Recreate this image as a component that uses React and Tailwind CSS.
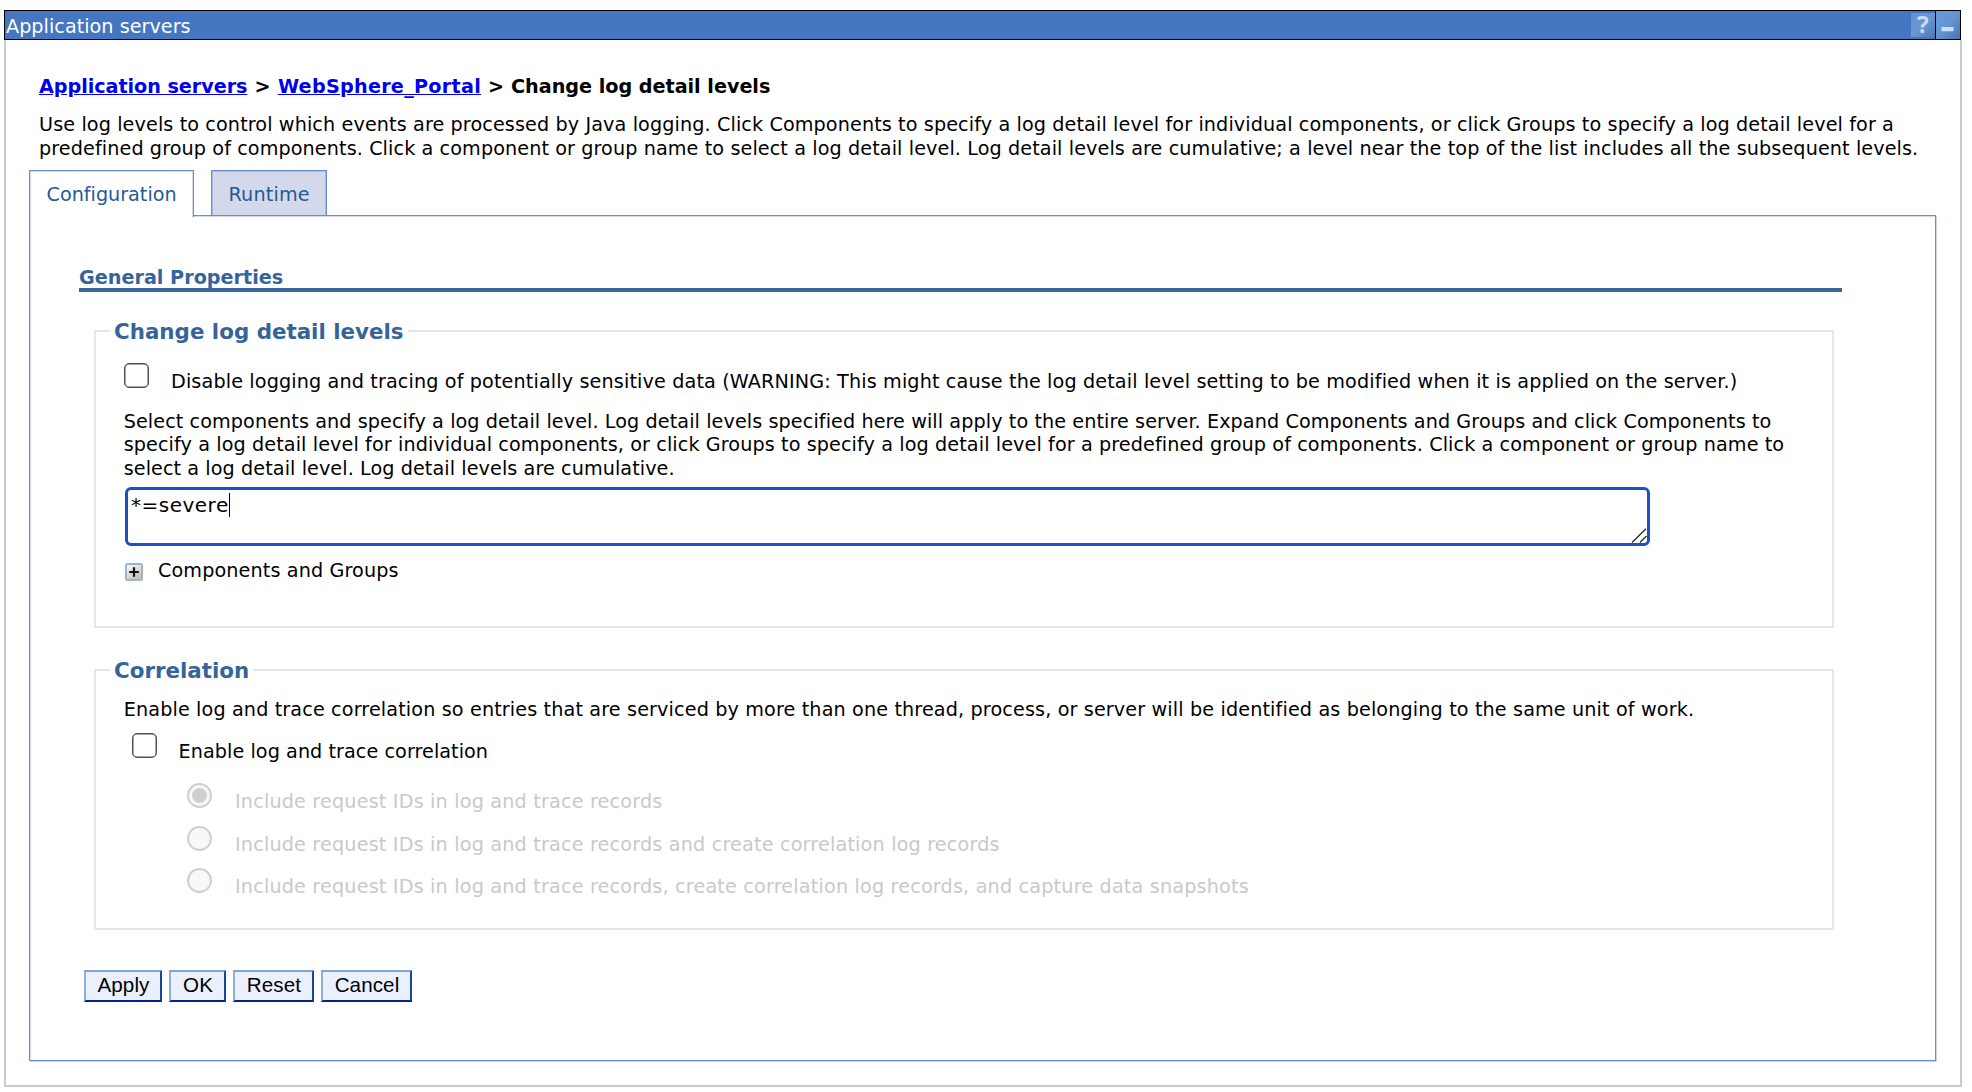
import React from "react";

function HelpIcon() {
  return (
    <span className="my-[2px] flex h-6 w-6 items-center justify-center bg-linear-to-br from-[#5f8fd0] via-[#6b98d4] to-[#4a76b8]">
      <svg width="24" height="24" viewBox="0 0 24 24" fill="none">
        <path d="M6.8 6.4C9.4 3.6 16 3.6 15.8 7.8C15.6 10.6 11.4 11 11.2 14.4" stroke="#c9dbf4" strokeWidth="3.2" />
        <path d="M9.4 16.4h3.8v3.4H9.4z" fill="#c9dbf4" />
      </svg>
    </span>
  );
}

function MinimizeIcon() {
  return (
    <span className="box-content flex h-7 w-6 items-center justify-center border-l border-black bg-linear-to-br from-[#6a9ad6] via-[#6494d2] to-[#4873b4]">
      <svg width="24" height="28" viewBox="0 0 24 28">
        <rect x="5.5" y="16" width="12" height="4.2" rx="0.5" fill="#cfdff6" />
      </svg>
    </span>
  );
}

function ExpandIcon() {
  return (
    <svg className="mt-[4.5px] shrink-0" width="18" height="18" viewBox="0 0 18 18">
      <defs>
        <linearGradient id="expandFill" x1="0" y1="0" x2="0.6" y2="1">
          <stop offset="0" stopColor="#ffffff" />
          <stop offset="1" stopColor="#c8c2b6" />
        </linearGradient>
      </defs>
      <rect x="1" y="1" width="16" height="16" rx="1.5" fill="url(#expandFill)" stroke="#9db4d0" strokeWidth="2" />
      <path d="M9 4.2v9.6M4.2 9h9.6" stroke="#111" strokeWidth="2.2" />
    </svg>
  );
}

function Checkbox({ className }) {
  return (
    <span
      role="checkbox"
      aria-checked="false"
      className={`h-[25px] w-[25px] shrink-0 rounded-[5px] border border-[#505050] bg-white shadow-[inset_0_0_0_0.5px_#505050] ${className}`}
    />
  );
}

function RadioRow({ checked, children }) {
  return (
    <div className="ml-[64.3px] flex h-[42.6px] items-start text-[#c9c9c9]">
      <span className="flex h-[25px] w-[25px] shrink-0 items-center justify-center rounded-full border-2 border-[#cfcfcf] bg-[#f8f8f8]">
        {checked && <span className="h-[15px] w-[15px] rounded-full bg-[#cfcfcf]" />}
      </span>
      <span className="ml-[22.7px] pt-[7px] tracking-[0.18px]">{children}</span>
    </div>
  );
}

function Section({ title, className, children }) {
  return (
    <fieldset className={`ml-[64px] w-[1740px] border-2 border-[#e6e6e6] pl-[27px] ${className}`}>
      <legend className="-ml-[13px] h-[26px] px-[4px] text-[21.4px] leading-[27px] font-bold text-[#36639a]">{title}</legend>
      {children}
    </fieldset>
  );
}

function Button({ className, children }) {
  return (
    <button
      className={`h-8 border-2 border-t-[#80a6d2] border-r-[#144a94] border-b-[#0a1f8c] border-l-[#8fb0d6] bg-[#ebf0ff] pb-[2px] pl-[1px] text-center font-['Liberation_Sans',Arial,sans-serif] text-[20.6px] leading-[26px] tracking-[0.1px] text-black ${className}`}
    >
      {children}
    </button>
  );
}

export default function App() {
  return (
    <div className="h-[1092px] w-[1972px] overflow-hidden bg-white pt-[10px] pl-1 font-['DejaVu_Sans',Verdana,sans-serif] text-[19.2px] leading-[23.3px] whitespace-nowrap text-black [font-variant-ligatures:none]">
      <header className="flex h-[30px] w-[1957px] items-stretch border border-black bg-[#4576c2]">
        <span className="ml-px flex-1 pt-[4px] tracking-[0.03px] text-white">Application servers</span>
        <HelpIcon />
        <MinimizeIcon />
      </header>

      <main className="h-[1047px] w-[1958px] border-x-2 border-b-2 border-[#cbcbcb] pt-[35px]">
        <nav className="ml-[33px] h-[23.3px] font-bold">
          <a href="#" className="tracking-[-0.05px] text-[#0000ee] underline">Application servers</a>
          <span className="mx-[7.2px]">&gt;</span>
          <a href="#" className="tracking-[0.26px] text-[#0000ee] underline">WebSphere_Portal</a>
          <span className="mx-[7px]">&gt;</span>
          <span className="tracking-[-0.02px]">Change log detail levels</span>
        </nav>

        <p className="mt-[15px] ml-[33px] h-[46.3px] tracking-[0.11px]">
          Use log levels to control which events are processed by Java logging. Click Components to specify a log detail level for individual components, or click Groups to specify a log detail level for a<br />
          <span className="tracking-[0.1px]">predefined group of components. Click a component or group name to select a log detail level. Log detail levels are cumulative; a level near the top of the list includes all the subsequent levels.</span>
        </p>

        <div className="mt-[10.4px] ml-[23px] flex h-[45px] text-[#255a94]">
          <div className="relative z-10 h-[47px] w-[165px] border border-b-0 border-[#6d8ccf] bg-white pt-[12px] pl-[16.5px] shadow-[inset_1px_1px_0_#d0daf2,inset_-1px_0_0_#d0daf2]">Configuration</div>
          <div className="ml-[17px] h-[45px] w-[116px] border border-b-0 border-[#6d8ccf] bg-[#d3d9eb] pt-[12px] pl-[16.5px] tracking-[0.15px] shadow-[inset_1px_1px_0_#a9b9e0,inset_-1px_0_0_#a9b9e0]">Runtime</div>
        </div>

        <section className="ml-[23px] h-[846px] w-[1907px] border border-[#6d8ccf] pt-[49px] shadow-[inset_1px_1px_0_#d0daf2,1px_1px_0_#c8d4f0]">
          <h2 className="ml-[49px] h-[27px] w-[1763px] border-b-4 border-[#3c659b] pt-px font-bold text-[#36639a]">General Properties</h2>

          <Section title="Change log detail levels" className="mt-[26px] h-[310px]">
            <div className="mt-[19px] flex h-[47px] items-start">
              <Checkbox className="ml-px" />
              <label className="ml-[22px] pt-[7px] tracking-[0.13px]">
                Disable logging and tracing of potentially sensitive data (WARNING: This might cause the log detail level setting to be modified when it is applied on the server.)
              </label>
            </div>
            <p className="ml-[0.7px] h-[70px] tracking-[0.1px]">
              <span className="tracking-[0.085px]">Select components and specify a log detail level. Log detail levels specified here will apply to the entire server. Expand Components and Groups and click Components to</span><br />
              specify a log detail level for individual components, or click Groups to specify a log detail level for a predefined group of components. Click a component or group name to<br />
              <span className="tracking-[0.08px]">select a log detail level. Log detail levels are cumulative.</span>
            </p>
            <div className="mt-[7px] ml-[2px] flex h-[59px] w-[1525px] rounded-[6px] border-3 border-[#1f4fc4] bg-white pt-[3px] pl-[3px]">
              <span className="text-[20px] leading-[24px] tracking-[0.5px]">*=severe</span>
              <span className="h-6 w-[1.5px] bg-black" />
              <svg className="mt-auto ml-auto" width="16" height="15" viewBox="0 0 16 15" fill="none">
                <path d="M1 14.5L15 0.8M9 14.5L15.5 8" stroke="#222" strokeWidth="1.2" />
              </svg>
            </div>
            <div className="mt-[13px] ml-[2.3px] flex items-start">
              <ExpandIcon />
              <span className="ml-[14.7px] tracking-[0.12px]">Components and Groups</span>
            </div>
          </Section>

          <Section title="Correlation" className="mt-[29px] h-[273px]">
            <p className="mt-[15px] ml-[0.7px] h-[23px] tracking-[0.132px]">
              Enable log and trace correlation so entries that are serviced by more than one thread, process, or server will be identified as belonging to the same unit of work.
            </p>
            <div className="mt-[12px] flex h-[50px] items-start">
              <Checkbox className="ml-[8.6px]" />
              <label className="ml-[22px] pt-[7px] tracking-[0.06px]">Enable log and trace correlation</label>
            </div>
            <RadioRow checked>Include request IDs in log and trace records</RadioRow>
            <RadioRow>Include request IDs in log and trace records and create correlation log records</RadioRow>
            <RadioRow>Include request IDs in log and trace records, create correlation log records, and capture data snapshots</RadioRow>
          </Section>

          <div className="mt-10 ml-[54px] flex gap-[7px]">
            <Button className="w-[78px]">Apply</Button>
            <Button className="w-[57px]">OK</Button>
            <Button className="w-[81px]">Reset</Button>
            <Button className="w-[91px]">Cancel</Button>
          </div>
        </section>
      </main>
    </div>
  );
}
